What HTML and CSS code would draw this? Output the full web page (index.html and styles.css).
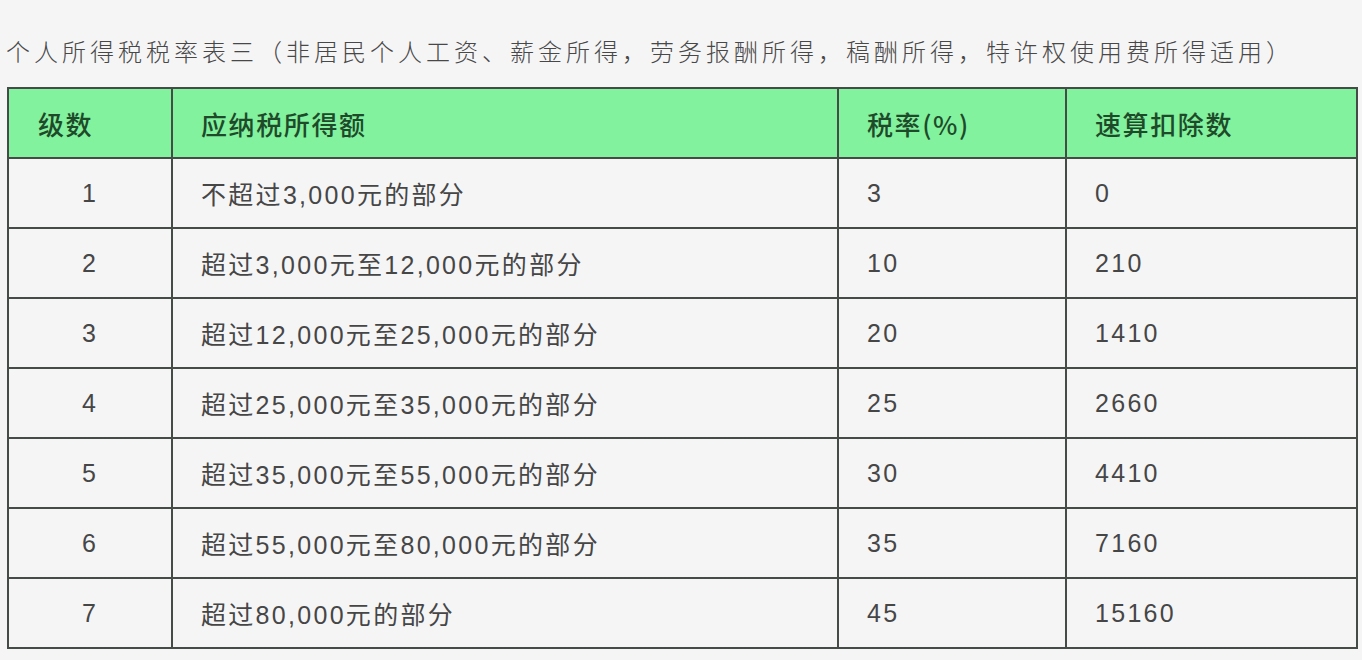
FILE: index.html
```html
<!DOCTYPE html>
<html lang="zh-CN">
<head>
<meta charset="utf-8">
<title>个人所得税税率表三</title>
<link rel="stylesheet" href="styles.css">
</head>
<body>
<div class="page">
  <p class="title">个人所得税税率表三（非居民个人工资、薪金所得，劳务报酬所得，稿酬所得，特许权使用费所得适用）</p>
  <table class="tax">
    <colgroup>
      <col class="c1"><col class="c2"><col class="c3"><col class="c4">
    </colgroup>
    <thead>
      <tr><th class="lvl">级数</th><th>应纳税所得额</th><th>税率(%)</th><th>速算扣除数</th></tr>
    </thead>
    <tbody>
      <tr><td class="num">1</td><td>不超过3,000元的部分</td><td>3</td><td>0</td></tr>
      <tr><td class="num">2</td><td>超过3,000元至12,000元的部分</td><td>10</td><td>210</td></tr>
      <tr><td class="num">3</td><td>超过12,000元至25,000元的部分</td><td>20</td><td>1410</td></tr>
      <tr><td class="num">4</td><td>超过25,000元至35,000元的部分</td><td>25</td><td>2660</td></tr>
      <tr><td class="num">5</td><td>超过35,000元至55,000元的部分</td><td>30</td><td>4410</td></tr>
      <tr><td class="num">6</td><td>超过55,000元至80,000元的部分</td><td>35</td><td>7160</td></tr>
      <tr><td class="num">7</td><td>超过80,000元的部分</td><td>45</td><td>15160</td></tr>
    </tbody>
  </table>
</div>
</body>
</html>
```
FILE: styles.css
```css
html, body {
  margin: 0;
  padding: 0;
  background: #f5f5f6;
}
.page {
  padding: 36px 0 0 7px;
  font-family: "Liberation Sans", "Noto Sans CJK SC", sans-serif;
  color: #444;
}
.title {
  margin: 0 0 17px -1px;
  font-size: 24px;
  line-height: 34px;
  letter-spacing: 4px;
  font-weight: 300;
  color: #484848;
  white-space: nowrap;
}
.tax {
  border-collapse: collapse;
  width: 1349px;
  table-layout: fixed;
  font-size: 25px;
}
.c1 { width: 164px; }
.c2 { width: 666px; }
.c3 { width: 228px; }
.c4 { width: 291px; }
.tax th, .tax td {
  border: 2px solid #454c47;
  height: 68px;
  padding: 0 0 0 28px;
  text-align: left;
  vertical-align: middle;
  letter-spacing: 2.3px;
}
.tax th {
  background: #82f29e;
  color: #1f4a2a;
  font-weight: 500;
  font-family: "Noto Sans CJK SC", sans-serif;
  font-size: 26px;
  letter-spacing: 1.6px;
}
.tax th.lvl { padding-left: 29px; }
.tax td {
  background: #f5f5f6;
  color: #464646;
}
.tax td.num {
  text-align: center;
  padding-left: 0;
}
```
